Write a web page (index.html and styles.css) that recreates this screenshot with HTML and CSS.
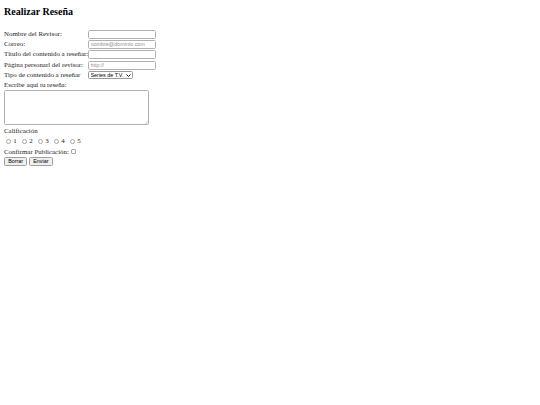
FILE: index.html
```html
<!DOCTYPE html>
<html lang="es">
<head>
<meta charset="utf-8">
<title>Realizar Reseña</title>
<link rel="stylesheet" href="styles.css">
</head>
<body>
<h3 class="title">Realizar Reseña</h3>
<form class="review">
  <div class="fields">
    <label class="field-label" for="nombre">Nombre del Revisor:</label>
    <input class="text-input" id="nombre" type="text">
    <label class="field-label" for="correo">Correo:</label>
    <input class="text-input" id="correo" type="email" placeholder="nombre@dominio.com">
    <label class="field-label" for="titulo">Título del contenido a reseñar:</label>
    <input class="text-input" id="titulo" type="text">
    <label class="field-label" for="pagina">Página personarl del revisor:</label>
    <input class="text-input" id="pagina" type="url" placeholder="http://">
    <label class="field-label" for="tipo">Tipo de contenido a reseñar</label>
    <div class="select-wrap">
      <select class="select" id="tipo">
        <option>Series de T.V.</option>
        <option>Películas</option>
      </select>
      <svg class="chevron" viewBox="0 0 10 6" width="5" height="3" aria-hidden="true"><path d="M1 1 L5 5 L9 1" fill="none" stroke="#000" stroke-width="1.8"/></svg>
    </div>
  </div>
  <label class="block-label" for="texto">Escribe aquí tu reseña:</label>
  <div class="text-wrap">
    <textarea class="review-text" id="texto"></textarea>
    <svg class="grip" viewBox="0 0 6 6" width="3" height="3" aria-hidden="true"><path d="M1 5.5 L5.5 1 M3.5 5.5 L5.5 3.5" stroke="#8a8a8a" stroke-width="0.9" fill="none"/></svg>
  </div>
  <div class="line first-line">Calificación</div>
  <div class="line rating">
    <label class="rate"><input class="radio" type="radio" name="cal" value="1">1</label>
    <label class="rate"><input class="radio" type="radio" name="cal" value="2">2</label>
    <label class="rate"><input class="radio" type="radio" name="cal" value="3">3</label>
    <label class="rate"><input class="radio" type="radio" name="cal" value="4">4</label>
    <label class="rate"><input class="radio" type="radio" name="cal" value="5">5</label>
  </div>
  <div class="line">Confirmar Publicación: <input class="check" type="checkbox"></div>
  <div class="buttons">
    <button class="btn" type="reset">Borrar</button>
    <button class="btn" type="submit">Enviar</button>
  </div>
</form>
</body>
</html>
```

FILE: styles.css
```css
html, body {
  margin: 0;
  background: #fff;
}
body {
  padding: 0 4px;
  font-family: "Liberation Serif", "Times New Roman", serif;
  font-size: 6.9px;
  color: #1c1c1c;
}
.title {
  margin: 6.3px 0 11.4px 0;
  font-size: 10px;
  line-height: 12px;
  font-weight: bold;
  color: #000;
}
.review {
  margin: 0;
}
.fields {
  display: grid;
  grid-template-columns: 84px auto;
  grid-auto-rows: 9px;
  row-gap: 1.3px;
  justify-items: start;
}
.field-label {
  line-height: 7px;
  align-self: start;
  white-space: nowrap;
}
.text-input,
.select,
.review-text,
.btn {
  font-family: "Liberation Sans", Arial, sans-serif;
  font-size: 5.4px;
  color: #000;
  box-sizing: border-box;
  margin: 0;
}
.text-input {
  width: 67.5px;
  height: 9px;
  padding: 0 1.5px;
  border: 1px solid #b0b0b0;
  border-radius: 1.5px;
  background: #fff;
  outline: none;
}
.text-input::placeholder {
  color: #909090;
}
.select-wrap {
  position: relative;
  width: 44.7px;
  height: 8px;
  align-self: center;
}
.select {
  appearance: none;
  -webkit-appearance: none;
  width: 100%;
  height: 100%;
  padding: 0 0 0 1.5px;
  border: 1px solid #9a9a9a;
  border-radius: 1.5px;
  background: #fff;
  line-height: 6px;
  outline: none;
}
.chevron {
  position: absolute;
  right: 2px;
  top: 2.6px;
  pointer-events: none;
}
.block-label {
  display: block;
  line-height: 9px;
}
.text-wrap {
  position: relative;
  width: 144.7px;
  margin-top: 1.4px;
}
.review-text {
  display: block;
  width: 144.7px;
  height: 35px;
  border: 1px solid #b0b0b0;
  border-radius: 1.5px;
  resize: none;
  background: #fff;
}
.grip {
  position: absolute;
  right: 1.2px;
  bottom: 1.2px;
  pointer-events: none;
}
.line {
  line-height: 10.4px;
  white-space: nowrap;
}
.first-line {
  margin-top: 0.7px;
}
.rating {
  display: flex;
}
.rate {
  display: inline-flex;
  align-items: center;
  width: 16px;
}
.radio {
  appearance: none;
  -webkit-appearance: none;
  width: 5px;
  height: 5px;
  margin: 0 2.6px 0 1.6px;
  border: 0.7px solid #a8a8a8;
  border-radius: 50%;
  background: #fff;
  box-sizing: border-box;
  position: relative;
  top: -0.3px;
}
.check {
  appearance: none;
  -webkit-appearance: none;
  width: 4.8px;
  height: 4.8px;
  margin: 0 0 0 0.5px;
  border: 0.7px solid #a8a8a8;
  border-radius: 1px;
  background: #fff;
  box-sizing: border-box;
  vertical-align: -0.3px;
}
.buttons {
  display: flex;
  gap: 1.7px;
}
.btn {
  height: 8.5px;
  padding: 0 3.2px;
  border: 0.7px solid #a0a0a0;
  border-radius: 1.5px;
  background: #efefef;
  line-height: 6px;
}
```
